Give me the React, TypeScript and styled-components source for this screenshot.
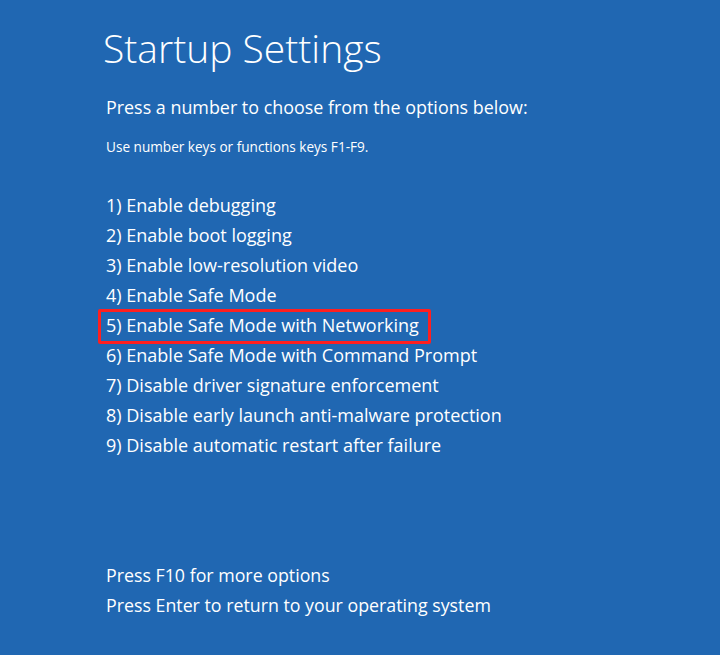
import React from "react";
import styled, { createGlobalStyle } from "styled-components";

const GlobalStyle = createGlobalStyle`
  html, body { margin: 0; padding: 0; background: #2067b2; }
  body { font-family: "Open Sans", "Noto Sans", sans-serif; color: #ffffff; }
`;

const Screen = styled.main`
  box-sizing: border-box;
  width: 720px;
  height: 655px;
  background: #2067b2;
  padding: 19px 0 0 104px;
  display: flex;
  flex-direction: column;
  align-items: flex-start;
  -webkit-font-smoothing: antialiased;
`;

const Title = styled.h1`
  margin: 0 0 0 -1px;
  font-weight: 300;
  font-size: 39px;
  line-height: 57px;
`;

const Subtitle = styled.p`
  margin: 18px 0 0 2px;
  font-size: 17.9px;
  line-height: 26px;
`;

const Hint = styled.p`
  margin: 17px 0 0 2px;
  font-size: 13.6px;
  line-height: 20px;
`;

const OptionList = styled.ol`
  list-style: none;
  margin: 33px 0 0 2px;
  padding: 0;
  display: flex;
  flex-direction: column;
  align-items: flex-start;
`;

const Option = styled.li<{ $selected?: boolean }>`
  position: relative;
  font-size: 18px;
  line-height: 30px;
  white-space: nowrap;
  &::after {
    content: "";
    display: ${(p) => (p.$selected ? "block" : "none")};
    position: absolute;
    left: -8px;
    right: -12px;
    top: -1px;
    bottom: -4px;
    border: 3px solid #ff1f1f;
    border-radius: 2px;
  }
`;

const Footer = styled.div`
  margin: 100px 0 0 2px;
  display: flex;
  flex-direction: column;
`;

const FooterLine = styled.div`
  font-size: 17.8px;
  line-height: 30px;
  white-space: nowrap;
`;

const options = [
  "Enable debugging",
  "Enable boot logging",
  "Enable low-resolution video",
  "Enable Safe Mode",
  "Enable Safe Mode with Networking",
  "Enable Safe Mode with Command Prompt",
  "Disable driver signature enforcement",
  "Disable early launch anti-malware protection",
  "Disable automatic restart after failure",
];

export default function App() {
  return (
    <>
      <GlobalStyle />
      <Screen>
        <Title>Startup Settings</Title>
        <Subtitle>Press a number to choose from the options below:</Subtitle>
        <Hint>Use number keys or functions keys F1-F9.</Hint>
        <OptionList>
          {options.map((o, i) => (
            <Option key={o} $selected={i === 4}>
              {i + 1}) {o}
            </Option>
          ))}
        </OptionList>
        <Footer>
          <FooterLine>Press F10 for more options</FooterLine>
          <FooterLine>Press Enter to return to your operating system</FooterLine>
        </Footer>
      </Screen>
    </>
  );
}
